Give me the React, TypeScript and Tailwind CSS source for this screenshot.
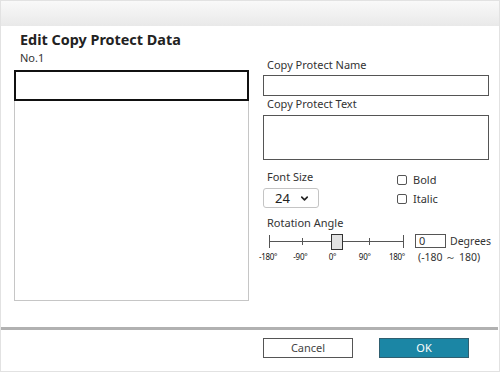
import { ChevronDown } from 'lucide-react'

const ticks = [6, 39, 73, 106, 140]
const tickLabels = ['-180°', '-90°', '0°', '90°', '180°']

function Label({ text, className = '' }: { text: string; className?: string }) {
  return <div className={`h-[14px] text-[11px] leading-[14px] text-[#333] pl-[4px] ${className}`}>{text}</div>
}

function Check({ label }: { label: string }) {
  return (
    <label className="flex items-center h-[19px]">
      <span className="w-[10px] h-[10px] border border-[#555] rounded-[2px] bg-white" />
      <span className="ml-[6px] text-[11px] leading-[14px] text-[#333]">{label}</span>
    </label>
  )
}

function AngleSlider() {
  return (
    <div className="w-[150px]">
      <svg width="150" height="22" className="block">
        <line x1="6" y1="11.5" x2="140" y2="11.5" stroke="#555" strokeWidth="1" />
        {ticks.map((x, i) => (
          <line
            key={x}
            x1={x + 0.5}
            x2={x + 0.5}
            y1={i === 0 || i === 4 ? 5 : 8}
            y2={i === 0 || i === 4 ? 18 : 15}
            stroke="#555"
            strokeWidth="1"
          />
        ))}
        <rect x="68.5" y="4.5" width="11" height="15" fill="#e2e2e2" stroke="#333" strokeWidth="1" />
      </svg>
      <div className="flex -ml-[11px] h-[10px]">
        {tickLabels.map((t) => (
          <span key={t} className="w-[33.5px] text-center text-[8px] leading-[10px] text-[#111] tracking-[-0.3px]">
            {t}
          </span>
        ))}
      </div>
    </div>
  )
}

export default function App() {
  return (
    <div
      className="w-[500px] h-[372px] flex flex-col border border-[#e2e2e2] bg-white"
      style={{ fontFamily: '"Noto Sans", "Open Sans", sans-serif' }}
    >
      <div className="h-[25px] bg-gradient-to-b from-[#f9f9f9] to-[#e9e9e9]" />

      <div className="flex flex-1">
        <div className="w-[248px] pl-[13px] pt-[4px]">
          <h1 className="pl-[6px] text-[14.4px] font-bold leading-[20px] text-[#222]">Edit Copy Protect Data</h1>
          <div className="pl-[6px] text-[11px] leading-[15px] text-[#333]">No.1</div>
          <div className="mt-[5px] w-[235px] h-[231px] border border-[#c6c6c6]">
            <div className="-mx-px -mt-px h-[31px] border-2 border-[#111]" />
          </div>
        </div>

        <div className="ml-[14px] w-[226px] pt-[32px]">
          <Label text="Copy Protect Name" />
          <div className="mt-[3px] h-[21px] border border-[#555] bg-white" />
          <Label text="Copy Protect Text" className="mt-[1px]" />
          <div className="mt-[4px] h-[45px] border border-[#555] bg-white" />

          <div className="mt-[10px] flex">
            <div className="w-[134px]">
              <Label text="Font Size" />
              <div className="mt-[4px] w-[56px] h-[20px] border border-[#c4c4c4] rounded-[3px] flex items-center pl-[11px] pr-[8px] justify-between">
                <span className="text-[13px] leading-[16px] text-[#222]">24</span>
                <ChevronDown size={11} strokeWidth={3.5} color="#222" />
              </div>
            </div>
            <div>
              <Check label="Bold" />
              <Check label="Italic" />
            </div>
          </div>

          <Label text="Rotation Angle" className="mt-[8px]" />
          <div className="flex">
            <AngleSlider />
            <div className="ml-[2px] pt-[4px]">
              <div className="flex items-center">
                <div className="w-[31px] h-[14px] border border-[#555] text-[11px] leading-[12px] pl-[3px] text-[#333]">0</div>
                <span className="ml-[4px] text-[10.5px] leading-[14px] text-[#333]">Degrees</span>
              </div>
              <div className="mt-[3px] pl-[3px] text-[10.5px] leading-[12px] text-[#333] whitespace-nowrap">(-180 ～ 180)</div>
            </div>
          </div>
        </div>
      </div>

      <div className="h-[3px] mr-[1px] bg-[#b1b1b1]" />

      <div className="h-[41px] pt-[8px] flex pl-[262px]">
        <button className="w-[90px] h-[20px] border border-[#555] bg-white text-[11px] text-[#444]">Cancel</button>
        <button className="ml-[26px] w-[90px] h-[20px] border border-[#2f5f70] bg-[#1b86a5] text-[11px] text-white">OK</button>
      </div>
    </div>
  )
}
